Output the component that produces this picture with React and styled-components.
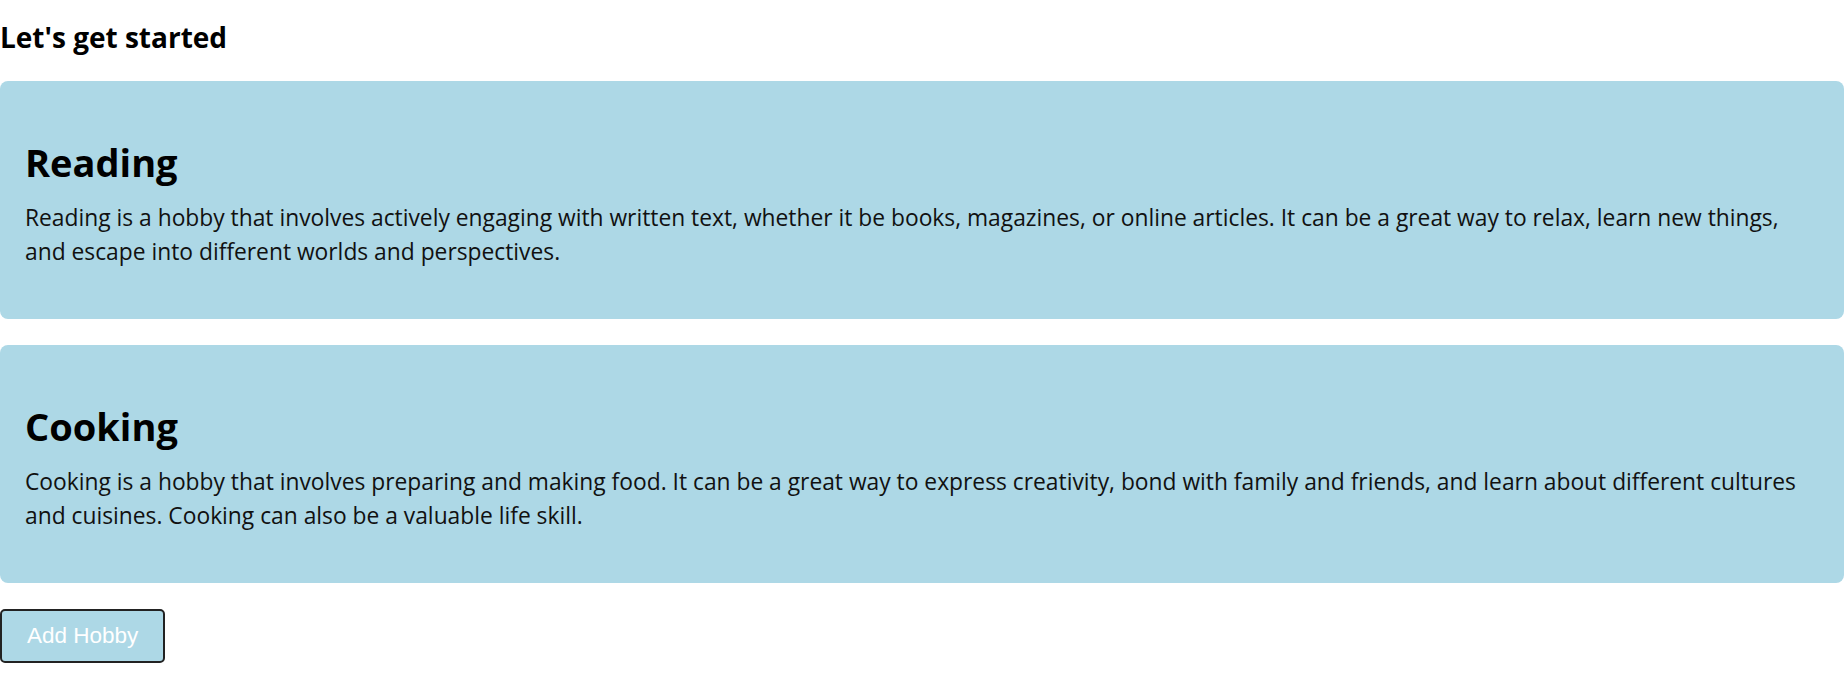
import React from 'react';
import styled, { createGlobalStyle } from 'styled-components';

const GlobalStyle = createGlobalStyle`
    body {
        margin: 0;
        background: #ffffff;
        font-family: 'Open Sans', 'Noto Sans', sans-serif;
        color: #000;
    }
`

const Page = styled.main`
    display: flex;
    flex-direction: column;
    align-items: flex-start;
`

const Title = styled.h3`
    font-size: 28px;
    line-height: 36px;
    font-weight: 700;
    margin: 19px 0 26px;
`

const HobbyList = styled.div`
    display: flex;
    flex-direction: column;
    gap: 26px;
    width: 100%;
`

const Card = styled.section`
    background: #add8e6;
    border-radius: 8px;
    padding: 26px 25px;
`

const CardTitle = styled.h2`
    font-size: 38px;
    line-height: 55px;
    font-weight: 700;
    margin: 28px 0 11px;
`

const CardText = styled.p`
    font-size: 22.8px;
    line-height: 34px;
    margin: 0 0 24px;
    color: #111;
`

const AddButton = styled.button`
    margin-top: 26px;
    padding: 12px 25px;
    background: #add8e6;
    color: #fff;
    border: 2px solid #222;
    border-radius: 5px;
    font-family: 'Liberation Sans', Arial, sans-serif;
    font-size: 22.5px;
    line-height: 26px;
    cursor: pointer;
`

const hobbies = [
    {
        name: 'Reading',
        text: 'Reading is a hobby that involves actively engaging with written text, whether it be books, magazines, or online articles. It can be a great way to relax, learn new things, and escape into different worlds and perspectives.',
    },
    {
        name: 'Cooking',
        text: 'Cooking is a hobby that involves preparing and making food. It can be a great way to express creativity, bond with family and friends, and learn about different cultures and cuisines. Cooking can also be a valuable life skill.',
    },
]

export default function App() {
    return (
        <Page>
            <GlobalStyle />
            <Title>Let's get started</Title>
            <HobbyList>
                {hobbies.map(h => (
                    <Card key={h.name}>
                        <CardTitle>{h.name}</CardTitle>
                        <CardText>{h.text}</CardText>
                    </Card>
                ))}
            </HobbyList>
            <AddButton>Add Hobby</AddButton>
        </Page>
    )
}
